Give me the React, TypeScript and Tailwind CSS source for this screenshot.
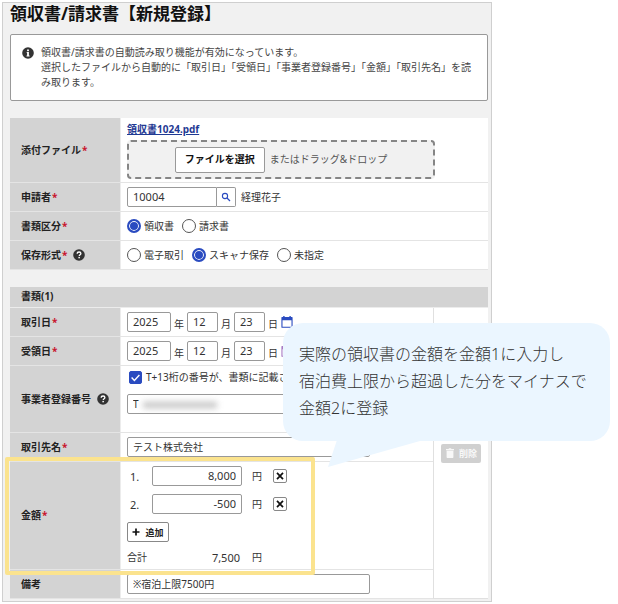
import type { ReactNode } from "react"

const inputClass = "h-5 rounded-xs border border-[#999] bg-white px-[5px] pb-px outline-none"

const radioClass =
  "h-3.5 w-3.5 appearance-none rounded-full border border-[#555] bg-white checked:border-2 checked:border-[#2a4bc0] checked:bg-[#2a4bc0] checked:shadow-[inset_0_0_0_1px_white]"

function InfoIcon() {
  return (
    <svg viewBox="0 0 12 12" className="mt-0.5 h-3 w-3 shrink-0">
      <circle cx="6" cy="6" r="5.8" fill="#333" />
      <rect x="5.1" y="2.5" width="1.8" height="1.7" fill="#fff" />
      <path d="M4.6 5h2.3v3.6h.7v.8H4.5v-.8h.6V5.8h-.5z" fill="#fff" />
    </svg>
  )
}

function HelpIcon() {
  return (
    <svg viewBox="0 0 12 12" className="h-3 w-3 shrink-0">
      <circle cx="6" cy="6" r="5.8" fill="#333" />
      <path d="M4.2 4.8C4.2 3.6 5 3 6.1 3s1.8.7 1.8 1.6c0 1.2-1.7 1.2-1.7 2.5" fill="none" stroke="#fff" strokeWidth="1.3" />
      <rect x="5.4" y="7.9" width="1.5" height="1.4" fill="#fff" />
    </svg>
  )
}

function SearchIcon() {
  return (
    <svg viewBox="0 0 10 10" className="h-2.5 w-2.5">
      <circle cx="4" cy="4" r="2.6" fill="none" stroke="#2a4bc0" strokeWidth="1.1" />
      <path d="M6 6l3 3" stroke="#2a4bc0" strokeWidth="1.2" />
    </svg>
  )
}

function CalendarIcon() {
  return (
    <svg viewBox="0 0 12 12" className="h-3 w-3">
      <path d="M2.2 0h1.4v1h4.8V0h1.4v1H11a.6.6 0 0 1 .6.6v9.6a.6.6 0 0 1-.6.6H1a.6.6 0 0 1-.6-.6V1.6A.6.6 0 0 1 1 1h1.2zM1.5 4.2v6.5h9V4.2z" fill="currentColor" />
    </svg>
  )
}

function TrashIcon() {
  return (
    <svg viewBox="0 0 10 10" className="h-2.5 w-2.5">
      <path d="M1 1h2.5l.5-.8h2l.5.8H9v1.2H1zM1.6 2.8h6.8v6.4a.7.7 0 0 1-.7.7H2.3a.7.7 0 0 1-.7-.7z" fill="currentColor" />
    </svg>
  )
}

type FieldProps = {
  label: string
  htmlFor?: string
  required?: boolean
  help?: boolean
  children: ReactNode
}

function Field({ label, htmlFor, required, help, children }: FieldProps) {
  return (
    <div className="flex min-h-[29px] border-b border-[#e4e4e4]">
      <div className="flex w-[111px] shrink-0 items-center border-r border-[#ececec] bg-[#d3d3d3] pl-[11px] font-bold text-[#222]">
        <label htmlFor={htmlFor}>{label}</label>
        {required && <span className="pl-px text-[#c8142d]">*</span>}
        {help && (
          <button type="button" aria-label="ヘルプ" className="ml-1.5">
            <HelpIcon />
          </button>
        )}
      </div>
      <div className="flex min-w-0 flex-1 flex-col justify-center pl-1.5">{children}</div>
    </div>
  )
}

function RadioGroup({ name, options, selected }: { name: string; options: string[]; selected: string }) {
  return (
    <div className="flex gap-2">
      {options.map((option) => (
        <label key={option} className="flex items-center gap-[3px]">
          <input type="radio" name={name} defaultChecked={option === selected} className={radioClass} />
          {option}
        </label>
      ))}
    </div>
  )
}

function DateField({ id, iconColor }: { id: string; iconColor: string }) {
  return (
    <div className="flex items-end gap-[3px]">
      <input id={id} defaultValue="2025" className={`${inputClass} w-11 text-[11px]`} />
      <span>年</span>
      <input aria-label="月" defaultValue="12" className={`${inputClass} w-[31px] text-[11px]`} />
      <span>月</span>
      <input aria-label="日" defaultValue="23" className={`${inputClass} w-[31px] text-[11px]`} />
      <span>日</span>
      <button type="button" aria-label="カレンダー" className={`self-center ${iconColor}`}>
        <CalendarIcon />
      </button>
    </div>
  )
}

function AmountLine({ no, value }: { no: number; value: string }) {
  return (
    <div className="flex items-center">
      <label htmlFor={`amount${no}`} className="w-[25px] pl-[3px] text-[11px]">
        {no}.
      </label>
      <input id={`amount${no}`} defaultValue={value} className={`${inputClass} w-[90px] text-right text-[11px]`} />
      <span className="ml-2.5">円</span>
      <button
        type="button"
        aria-label="行を削除"
        className="ml-[11px] flex h-3.5 w-3.5 items-center justify-center rounded-xs border border-[#888] bg-white"
      >
        <svg viewBox="0 0 8 8" className="h-2 w-2">
          <path d="M1 .8l6 6.4M7 .8L1 7.2" stroke="#111" strokeWidth="1.7" />
        </svg>
      </button>
    </div>
  )
}

export default function App() {
  return (
    <div className="relative bg-white pt-0.5 pl-0.5 font-['Noto_Sans','Noto_Sans_CJK_JP',sans-serif] text-[10px] leading-[15px] text-[#333]">
      <main className="mr-[126px] border border-[#cfcfcf] bg-[#f1f1f1] pt-px pr-[3px] pb-0.5 pl-[7px]">
        <h1 className="text-[17px] leading-5 font-bold text-[#111]">領収書/請求書【新規登録】</h1>

        <div className="mt-2.5 flex gap-[7px] rounded-xs border border-[#999] bg-white py-2.5 pr-2 pl-[11px] text-[#444]">
          <InfoIcon />
          <p>
            領収書/請求書の自動読み取り機能が有効になっています。
            <br />
            選択したファイルから自動的に「取引日」「受領日」「事業者登録番号」「金額」「取引先名」を読み取ります。
          </p>
        </div>

        <section className="mt-[17px] bg-white">
          <Field label="添付ファイル" required htmlFor="file">
            <div className="pt-1 pb-[3px]">
              <a href="#" className="block leading-[14px] font-bold text-[#1f3a93] underline">
                領収書1024.pdf
              </a>
              <div className="mt-1 flex h-[39px] w-full max-w-[308px] items-center justify-center gap-[5px] rounded-sm border-2 border-dashed border-[#858585] bg-[#f1f1f1]">
                <button id="file" type="button" className="h-[26px] w-[90px] rounded-xs border border-[#999] bg-white font-bold text-[#111]">
                  ファイルを選択
                </button>
                <span className="text-[#555]">またはドラッグ&ドロップ</span>
              </div>
            </div>
          </Field>
          <Field label="申請者" required htmlFor="applicant">
            <div className="flex items-center">
              <input id="applicant" defaultValue="10004" className={`${inputClass} w-[90px] rounded-r-none text-[11px]`} />
              <button
                type="button"
                aria-label="検索"
                className="flex h-5 w-[19px] items-center justify-center rounded-r-xs border border-l-0 border-[#999] bg-white"
              >
                <SearchIcon />
              </button>
              <span className="ml-[5px]">経理花子</span>
            </div>
          </Field>
          <Field label="書類区分" required>
            <RadioGroup name="kind" options={["領収書", "請求書"]} selected="領収書" />
          </Field>
          <Field label="保存形式" required help>
            <RadioGroup name="format" options={["電子取引", "スキャナ保存", "未指定"]} selected="スキャナ保存" />
          </Field>
        </section>

        <section className="mt-[17px] bg-white">
          <h2 className="h-[21px] border-b border-[#ececec] bg-[#d3d3d3] pt-[2px] pl-[11px] text-[10px] font-bold text-[#222]">書類(1)</h2>
          <div className="flex">
            <div className="min-w-0 flex-1">
              <Field label="取引日" required htmlFor="tradeDate">
                <DateField id="tradeDate" iconColor="text-[#2a4bc0]" />
              </Field>
              <Field label="受領日" required htmlFor="receiptDate">
                <DateField id="receiptDate" iconColor="text-[#a77bc4]" />
              </Field>
              <Field label="事業者登録番号" help htmlFor="regNo">
                <div className="flex flex-col items-start gap-[9px] pt-1 pb-[18px]">
                  <label className="flex items-center gap-1 pl-0.5">
                    <span className="relative h-[13px] w-[13px]">
                      <input type="checkbox" defaultChecked className="block h-[13px] w-[13px] appearance-none rounded-xs border border-[#2a4bc0] bg-white checked:bg-[#2a4bc0]" />
                      <svg viewBox="0 0 13 13" className="pointer-events-none absolute inset-0">
                        <path d="M2.6 6.5l2.8 2.9L10.4 4" fill="none" stroke="#fff" strokeWidth="1.4" />
                      </svg>
                    </span>
                    T+13桁の番号が、書類に記載さ
                  </label>
                  <div className="relative w-[243px]">
                    <input id="regNo" defaultValue="T" className={`${inputClass} block w-full`} />
                    <span className="absolute top-2 left-4 h-1.5 w-[74px] bg-[#999] opacity-60 blur-[3px]" />
                  </div>
                </div>
              </Field>
              <Field label="取引先名" required htmlFor="client">
                <input id="client" defaultValue="テスト株式会社" className={`${inputClass} w-[243px]`} />
              </Field>
              <div className="relative">
                <Field label="金額" required htmlFor="amount1">
                  <div className="flex flex-col items-start gap-2 py-1">
                    <AmountLine no={1} value="8,000" />
                    <AmountLine no={2} value="-500" />
                    <button
                      type="button"
                      className="flex h-5 w-[42px] items-center justify-center gap-[5px] rounded-xs border border-[#888] bg-white text-[9px] font-bold text-[#222]"
                    >
                      <svg viewBox="0 0 8 8" className="h-2 w-2">
                        <path d="M4 .5v7M.5 4h7" stroke="#111" strokeWidth="1.7" />
                      </svg>
                      追加
                    </button>
                    <div className="flex">
                      <span className="w-[25px]">合計</span>
                      <span className="w-[90px] pr-0.5 text-right text-[11px]">7,500</span>
                      <span className="ml-2.5">円</span>
                    </div>
                  </div>
                </Field>
                <div className="pointer-events-none absolute -inset-y-[5px] -left-[5px] w-[310px] rounded-xs border-4 border-[#fbe38e]" />
              </div>
              <Field label="備考" htmlFor="note">
                <input id="note" defaultValue="※宿泊上限7500円" className={`${inputClass} w-[243px]`} />
              </Field>
            </div>
            <div className="flex w-[55px] items-center justify-center border-b border-l border-[#e0e0e0]">
              <button
                type="button"
                disabled
                className="flex h-[19px] w-10 items-center justify-center gap-1 rounded-xs bg-[#d0d0d0] text-[9px] font-bold text-[#f8f8f8]"
              >
                <TrashIcon />
                削除
              </button>
            </div>
          </div>
        </section>
      </main>

      <aside className="absolute top-[323px] right-2 left-[283px] rounded-[20px] bg-[#ebf6ff] px-4 pt-[18px] pb-[19px] text-base leading-[27px] font-light">
        実際の領収書の金額を金額1に入力し
        <br />
        宿泊費上限から超過した分をマイナスで
        <br />
        金額2に登録
        <svg viewBox="0 0 92 27" className="absolute top-[117px] left-[45px] h-[27px] w-[92px]">
          <path d="M9 0h83v1L0 27z" fill="#ebf6ff" />
        </svg>
      </aside>
    </div>
  )
}
